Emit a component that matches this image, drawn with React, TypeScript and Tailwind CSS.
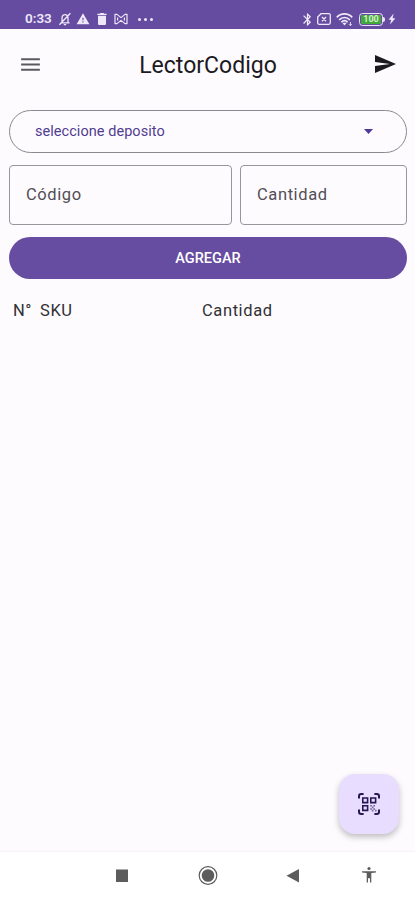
import type { ReactNode } from 'react';
import { MdBluetooth, MdDelete, MdMenu, MdSend, MdWarning } from 'react-icons/md';

const BellOffIcon = () => (
  <svg className="h-[14px] w-[14px]" viewBox="0 0 14 14" fill="none" stroke="currentColor" strokeWidth="1.3">
    <path d="M2.4 10.8h9.2M4 10.5V6c0-2 1.3-3.4 3-3.4S10 4 10 6v4.5M5.8 12.6h2.4M1.4 12.8 12.4 1.2" />
  </svg>
);

const BowIcon = () => (
  <svg className="h-[12px] w-[14px]" viewBox="0 0 14 12" fill="none" stroke="currentColor" strokeWidth="1.2" strokeLinejoin="round">
    <path d="M1 1.4h2L7 4.6l4-3.2h2v9.2h-2L7 7.4l-4 3.2H1zM3.6 4.4v3.2M10.4 4.4v3.2" />
  </svg>
);

const SimOffIcon = () => (
  <svg className="h-[12px] w-[14px]" viewBox="0 0 14 12" fill="none" stroke="currentColor" strokeWidth="1.3">
    <path d="M4 .7h7.8c.9 0 1.5.6 1.5 1.5v7.6c0 .9-.6 1.5-1.5 1.5H2.2c-.9 0-1.5-.6-1.5-1.5V4zM5 4l4 4.2M9 4 5 8.2" />
  </svg>
);

const WifiIcon = () => (
  <svg className="h-[13px] w-[17px]" viewBox="0 0 17 13" fill="none" stroke="currentColor" strokeWidth="1.7">
    <path d="M.8 4.4C5-.2 12-.2 16.2 4.4M3.2 6.9c3-3.2 7.6-3.2 10.6 0M5.4 9.2c1.8-2 4.4-2 6.2 0" />
    <path d="M6.2 9.7h4.6l-2.3 2.8z" fill="currentColor" stroke="none" />
    <path d="M14.4 9v3.6M13 11.2l1.4 1.4 1.4-1.4" strokeWidth=".9" />
  </svg>
);

const BoltIcon = () => (
  <svg className="h-[12px] w-[8px]" viewBox="0 0 8 12" fill="currentColor">
    <path d="M5.6.6.6 6.8h2.6L2 11.4l5.4-6.2H4.6z" />
  </svg>
);

const ScanIcon = () => (
  <svg className="size-[22px]" viewBox="0 0 22 22" fill="none" stroke="currentColor" strokeWidth="1.6">
    <path d="M1 5.6V3.2Q1 1 3.2 1h2.4M16.4 1h2.4Q21 1 21 3.2v2.4M21 16.4v2.4q0 2.2-2.2 2.2h-2.4M5.6 21H3.2Q1 21 1 18.8v-2.4" strokeWidth="2" />
    <path d="M4.8 5h4.8v4.6H4.8zM12.8 5h4.8v4.6h-4.8zM4.8 12.8h4.8v4.6H4.8z" />
    <path
      d="M12.2 12h1.6v1.6h-1.6zM15.4 12H17v1.6h-1.6zM13.8 13.6h1.6v1.6h-1.6zM12.2 15.2h1.6v1.6h-1.6zM15.4 15.2H17v1.6h-1.6zM13.8 16.8h1.6v1.6h-1.6zM17 16.8h1.6v1.6H17z"
      fill="currentColor"
      stroke="none"
      opacity=".6"
    />
  </svg>
);

const Battery = () => (
  <div className="flex items-center">
    <div className="flex h-[13px] w-[24px] items-center justify-center rounded-[3.5px] border-[1.5px] border-[#e9e1f7] p-px">
      <span className="flex h-full w-full items-center justify-center rounded-[1px] bg-[#42a83c] text-[9px] leading-none font-bold text-[#d3efc8]">
        100
      </span>
    </div>
    <span className="h-[5px] w-[2px] rounded-r-sm bg-[#e9e1f7]" />
  </div>
);

const StatusBar = () => (
  <div className="flex h-[29px] shrink-0 items-center justify-between bg-[#654ca1] pt-[9px] pr-[19px] pl-[25px] text-[#eee8f9]">
    <div className="flex items-center">
      <span className="w-[33px] text-[13.5px] leading-none font-semibold">0:33</span>
      <BellOffIcon />
      <MdWarning className="ml-[4px] size-[14px]" />
      <MdDelete className="ml-[4px] size-[16px]" />
      <span className="ml-[4px]">
        <BowIcon />
      </span>
      <span className="ml-[10px] flex gap-[3px]">
        <span className="size-[3px] rounded-full bg-current" />
        <span className="size-[3px] rounded-full bg-current" />
        <span className="size-[3px] rounded-full bg-current" />
      </span>
    </div>
    <div className="flex items-center">
      <MdBluetooth className="size-[15px]" />
      <span className="ml-[2px]">
        <SimOffIcon />
      </span>
      <span className="ml-[5px]">
        <WifiIcon />
      </span>
      <span className="ml-[6px]">
        <Battery />
      </span>
      <span className="ml-[3px]">
        <BoltIcon />
      </span>
    </div>
  </div>
);

const Field = ({ children, className }: { children: ReactNode; className: string }) => (
  <div className={`flex h-[60px] items-center rounded-[4px] border border-[#99959d] pl-[16px] text-[16.5px] tracking-[0.6px] text-[#514e55] ${className}`}>
    {children}
  </div>
);

const NavBar = () => (
  <div className="h-[49px] shrink-0 border-t border-[#f6f4f8] bg-white text-[#5c5c5c]">
    <svg className="block h-[48px] w-full" viewBox="0 0 415 48" fill="currentColor">
      <rect x="116" y="17.5" width="12" height="12.5" />
      <circle cx="208" cy="23.5" r="6.3" />
      <circle cx="208" cy="23.5" r="8.8" fill="none" stroke="currentColor" strokeWidth="1.2" />
      <path d="M286.5 23.8 299 17v13.5z" />
      <circle cx="369" cy="16.5" r="1.6" />
      <path d="M362 19.2h14v1.2l-4.7.6v9.6H370v-4.4h-2v4.4h-1.3V21l-4.7-.6z" />
    </svg>
  </div>
);

export default function App() {
  return (
    <div className="flex h-[900px] w-full flex-col overflow-hidden bg-[#fefbff] font-[Roboto,sans-serif]">
      <StatusBar />

      <header className="flex h-[70px] shrink-0 items-center justify-between pr-[18px] pl-[18px] text-[#1b1a1e]">
        <MdMenu className="size-[25px] text-[#5b595d]" />
        <h1 className="pt-[2px] text-[23px] leading-none">LectorCodigo</h1>
        <MdSend className="size-[24px]" />
      </header>

      <main className="flex flex-1 flex-col pt-[11px] pr-[8px] pl-[9px]">
        <button className="flex h-[43px] shrink-0 items-center justify-between rounded-full border border-[#8b888e] pr-[33px] pl-[25px] text-[14.5px] text-[#503d91]">
          <span className="pt-px tracking-[0.05px]">seleccione deposito</span>
          <svg className="h-[5px] w-[9px]" viewBox="0 0 9 5" fill="#4d389b">
            <path d="M0 0h9L4.5 5z" />
          </svg>
        </button>

        <div className="mt-[12px] flex gap-[8px]">
          <Field className="w-[223px]">Código</Field>
          <Field className="flex-1">Cantidad</Field>
        </div>

        <button className="mt-[12px] h-[42px] shrink-0 rounded-full bg-[#664da1] pt-[2px] text-[14.5px] font-medium text-white">
          AGREGAR
        </button>

        <div className="mt-[20px] flex pl-[4px] text-[16.5px] leading-6 tracking-[0.6px] text-[#313034]">
          <span className="w-[27px]">N°</span>
          <span className="w-[162px]">SKU</span>
          <span>Cantidad</span>
        </div>

        <button className="mt-auto mr-[8px] mb-[17px] flex size-[60px] items-center justify-center self-end rounded-[16px] bg-[#e8ddfe] text-[#271653] shadow-[0_3px_6px_rgba(0,0,0,0.25)]">
          <ScanIcon />
        </button>
      </main>

      <NavBar />
    </div>
  );
}
